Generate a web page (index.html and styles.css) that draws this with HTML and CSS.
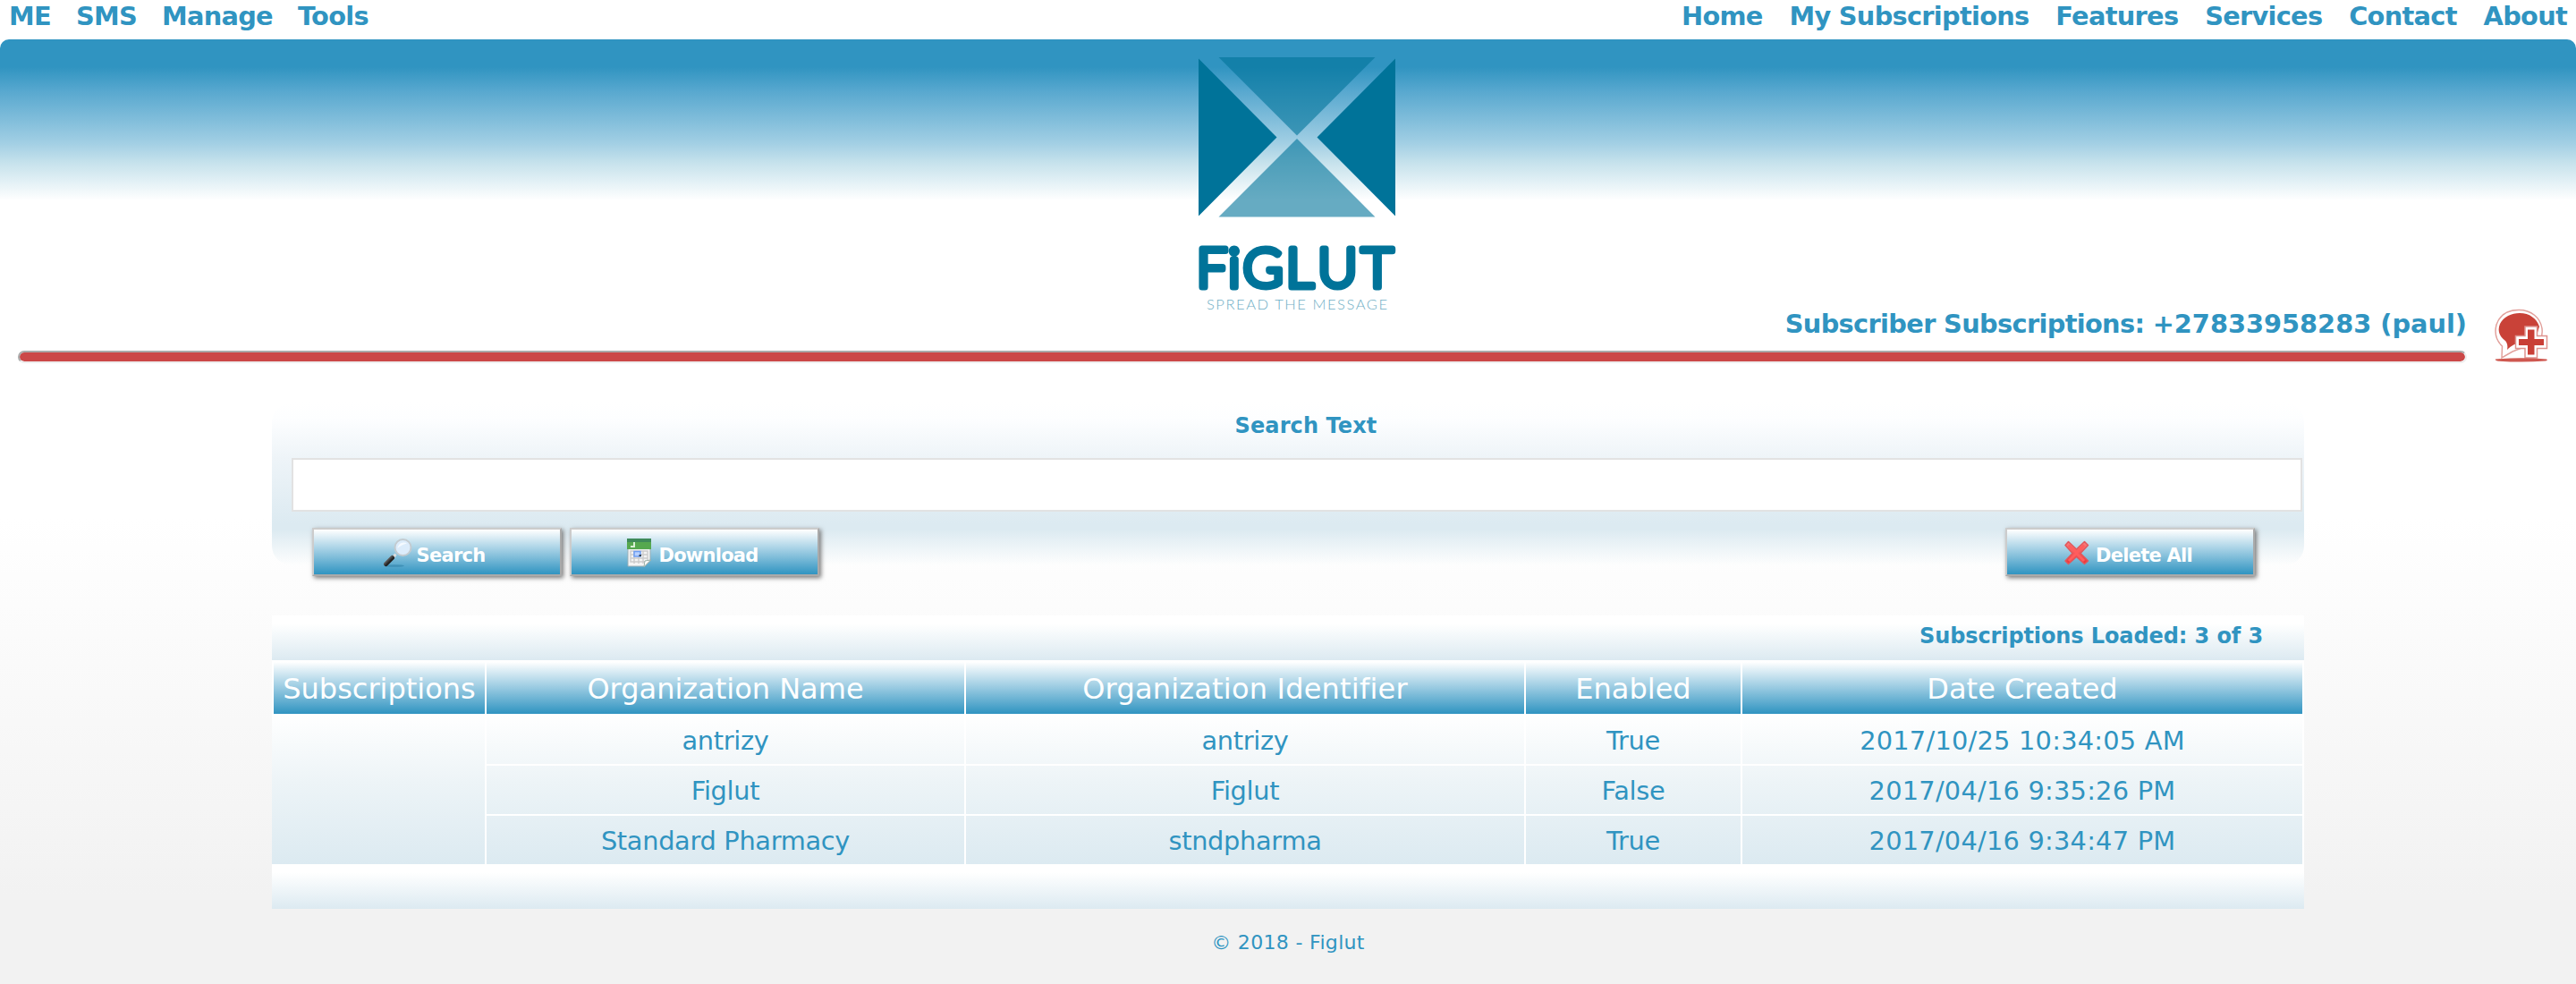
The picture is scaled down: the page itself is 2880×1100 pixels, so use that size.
FILE: index.html
```html
<!DOCTYPE html>
<html lang="en">
<head>
<meta charset="utf-8">
<title>Subscriber Subscriptions - Figlut</title>
<link rel="stylesheet" href="styles.css">
</head>
<body>
<nav class="topnav">
  <ul class="menu"><li>ME</li><li>SMS</li><li>Manage</li><li>Tools</li></ul>
  <ul class="menu menu-site"><li>Home</li><li>My Subscriptions</li><li>Features</li><li>Services</li><li>Contact</li><li>About</li></ul>
</nav>
<header class="banner">
  <svg class="logo" width="220" height="290" viewBox="0 0 220 290">
    <path fill="#007399" d="M0 1.500 87.500 89.500 0 177.500ZM220 1.500 132.500 89.500 220 177.500Z"/>
    <path fill="#007399" fill-opacity=".6" d="M22.500 0H197.500L110 87.500ZM110 91 197.500 178.500H22.500Z"/>
    <g class="wordmark">
      <text x="-2.500" y="256.500">F</text><text x="33" y="256.500">i</text><text x="49.500" y="256.500">G</text><text x="97.500" y="256.500">L</text><text x="133" y="256.500">U</text><text x="182" y="256.500">T</text>
    </g>
    <text class="tagline" x="9" y="281.500" textLength="202">SPREAD THE MESSAGE</text>
  </svg>
</header>
<section class="titlebar">
  <div class="title-main">
    <h1>Subscriber Subscriptions: <span class="number">+27833958283 (paul)</span></h1>
    <hr>
  </div>
  <svg class="add-icon" width="60" height="62" viewBox="0 0 60 62">
    <path d="M8 55 8.500 42C1 35 0 26 2 18 6 6 16 1.500 27 1.500 41 1.500 51 10 53 22 53.500 27 53 32 51 36L20 48Z" fill="#fff" stroke="#e2a19c" stroke-width="1.500"/>
    <path d="M14 46C15 42 14 38 12 36 5 31 3 24 6 17 10 9 19 5 28 5 39 5 47 11 50 20L44 40 30 38C24 38 18 42 14 46Z" fill="#c94238"/>
    <path d="M34 20H47.500V30.500H58.500V44.500H47.500V55H34V44.500H23.500V30.500H34Z" fill="#fff" stroke="#df938e" stroke-width="1.500"/>
    <path d="M37 23.500H44.500V34H55V41H44.500V51.500H37V41H27V34H37Z" fill="#c93f36"/>
    <path d="M1 56.500Q30 54 58 56.500 60 58 57 58.500 30 60.500 3 58.500Q0 57.500 1 56.500Z" fill="#cf5850"/>
  </svg>
</section>
<main class="content">
  <section class="search">
    <label class="search-label" for="q">Search Text</label>
    <input class="search-input" id="q" type="text">
    <div class="actions">
      <button class="btn" type="button">
        <svg width="32" height="32" viewBox="0 0 32 32"><defs><linearGradient id="handle" x1="0" y1="0" x2="1" y2="1"><stop offset="0" stop-color="#999"/><stop offset=".6" stop-color="#222"/></linearGradient></defs><ellipse cx="12" cy="30.500" rx="11" ry="1.300" fill="#1d6f96" opacity=".4"/><path d="M13.500 17.500 10.500 21" stroke="#ddd" stroke-width="3"/><path d="M9.500 21.500 2.500 28.500" stroke="url(#handle)" stroke-width="5" stroke-linecap="round"/><circle cx="21.500" cy="10" r="9" fill="#dcecfb" stroke="#c3cbd0" stroke-width="2"/><path d="M15.500 11A7 7 0 0 1 26 5.500Q19 7 15.500 11Z" fill="#f5faff"/></svg>
        <span>Search</span>
      </button>
      <button class="btn" type="button">
        <svg width="32" height="32" viewBox="0 0 32 32"><path d="M3 1H28V25L22 31H3Z" fill="#f4f4f4" stroke="#9aaeb5"/><path d="M2 0H29V12H2Z" fill="#56a84f"/><path d="M2 0H29V4H2Z" fill="#3f8a5a"/><path d="M10 4V9H6" fill="none" stroke="#d9f0d5" stroke-width="2"/><path d="M6 14H25V26H6ZM6 18H25M6 22H25M10 14V28M15 14V28M20 14V28" fill="none" stroke="#ccc" stroke-width="1.400"/><path d="M10 14.500H17V20H10Z" fill="#b7d1ff" stroke="#6d9df2" stroke-width="1.500"/><path d="M15.500 18H18V20H15.500Z" fill="#345"/><path d="M28.500 24 21 31.500 22 25Z" fill="#fff" stroke="#9ab0a8"/></svg>
        <span>Download</span>
      </button>
      <button class="btn btn-delete" type="button">
        <svg width="32" height="32" viewBox="0 0 32 32"><defs><linearGradient id="cross" x1="0" y1="0" x2="0" y2="1"><stop offset="0" stop-color="#f98080"/><stop offset="1" stop-color="#ee3236"/></linearGradient></defs><path d="M6.500 3.500 15.500 12 24.500 3.500 28.500 7.500 20 16.500 28.500 25 24.500 28.500 15.500 20.500 6.500 28.500 3 25 11 16.500 3 7.500Z" fill="url(#cross)" stroke="#e0585c" stroke-width="1.500" stroke-linejoin="round"/><path d="M7 7.500 15.500 16 24 7.500M7 25 15.500 16.500 24 25" fill="none" stroke="#ff5d5d" stroke-width="3"/></svg>
        <span>Delete All</span>
      </button>
    </div>
  </section>
  <section class="results">
    <div class="band count"><span>Subscriptions Loaded: 3 of 3</span></div>
    <table class="grid">
      <colgroup><col class="c1"><col class="c2"><col class="c3"><col class="c4"><col class="c5"></colgroup>
      <thead><tr><th>Subscriptions</th><th>Organization Name</th><th class="ident">Organization Identifier</th><th>Enabled</th><th>Date Created</th></tr></thead>
      <tbody>
        <tr class="r1"><td rowspan="3" class="side"></td><td>antrizy</td><td>antrizy</td><td>True</td><td class="date">2017/10/25 10:34:05 AM</td></tr>
        <tr class="r2"><td>Figlut</td><td>Figlut</td><td>False</td><td class="date">2017/04/16 9:35:26 PM</td></tr>
        <tr class="r3"><td>Standard Pharmacy</td><td>stndpharma</td><td>True</td><td class="date">2017/04/16 9:34:47 PM</td></tr>
      </tbody>
    </table>
    <div class="band"></div>
  </section>
</main>
<footer class="footer">© 2018 - Figlut</footer>
</body>
</html>
```
FILE: styles.css
```css
* { box-sizing: border-box; }

body {
  margin: 0;
  height: 1100px;
  overflow: hidden;
  font-family: Verdana, "DejaVu Sans", sans-serif;
  color: #3094c1;
  background: linear-gradient(#fff 0, #fff 580px, #f2f2f2 1000px, #f2f2f2 1100px);
}

.topnav {
  display: flex;
  justify-content: space-between;
  height: 44px;
  padding: 1px 10px 0 10px;
}

.menu {
  display: flex;
  gap: 28px;
  margin: 0;
  padding: 0;
  list-style: none;
  font-size: 28.8px;
  font-weight: bold;
  letter-spacing: -.7px;
  line-height: 35px;
  white-space: nowrap;
}

.menu-site { gap: 29.8px; }

.banner {
  height: 296px;
  padding: 20px 0 0 1340px;
  border-radius: 10px 10px 0 0;
  background: linear-gradient(#3094c1 0, #3094c1 31px, #58a8cf 58px, #a2cfe4 116px, #c6e2ec 138px, #fff 180px);
}

.logo { display: block; overflow: visible; }

.wordmark {
  font-family: Lato, sans-serif;
  font-size: 61.500px;
  font-weight: 300;
  fill: #007399;
  stroke: #007399;
  stroke-width: 7px;
  stroke-linejoin: round;
}

.tagline {
  font-family: Lato, sans-serif;
  font-weight: 300;
  font-size: 16.5px;
  fill: #6fafc6;
}

.titlebar {
  display: flex;
  justify-content: space-between;
  height: 110px;
  padding: 5px 31px 0 20px;
}

.title-main { width: 2738px; text-align: right; }

h1 {
  margin: 0;
  font-size: 28.8px;
  letter-spacing: -.65px;
  line-height: 34px;
}

.number { letter-spacing: 0; }

hr {
  height: 14px;
  margin: 13px 0 0;
  border: 2px solid;
  border-color: #aaa #eee #eee #aaa;
  border-radius: 7px;
  background: #cb4848 padding-box;
}

.content { width: 2272px; margin: 0 auto; }

.search {
  display: flex;
  flex-direction: column;
  height: 182px;
  padding-left: 22px;
  padding-right: 2px;
  border-radius: 22px;
  background: linear-gradient(#fff 0, #fdfeff 18px, #eef4f8 62px, #dceaf1 136px, #dceaf1 142px, rgba(255,255,255,0) 182px);
}

.search-label {
  flex: none;
  height: 62px;
  padding-left: 20px;
  text-align: center;
  font-size: 24px;
  font-weight: bold;
  letter-spacing: .1px;
  line-height: 52px;
}

.search-input {
  flex: none;
  width: 100%;
  height: 60px;
  border: 2px solid #e2e2e2;
  background: #fff;
  outline: none;
}

.actions {
  display: flex;
  gap: 9px;
  margin-top: 18px;
  padding: 0 53px 0 23px;
}

.btn {
  display: flex;
  align-items: center;
  justify-content: center;
  gap: 5px;
  width: 279px;
  height: 54px;
  flex: none;
  padding: 7px 6px 0 0;
  border: 2px solid;
  border-color: #ccc #aaa #aaa #ccc;
  background: linear-gradient(#fff, #a2cfe4 45%, #3094c1);
  box-shadow: 2px 2px 5px #777;
  color: #fff;
  font: bold 21px Verdana, "DejaVu Sans", sans-serif;
  letter-spacing: -.75px;
}

.btn svg { margin-top: -6px; }
.btn-delete { margin-left: auto; }

.results { margin-top: 56px; }

.band {
  height: 50px;
  background: linear-gradient(#fff 0, #fff 18%, #dceaf1);
}

.count {
  padding-right: 46px;
  text-align: right;
  font-size: 24px;
  font-weight: bold;
  letter-spacing: -.1px;
  line-height: 46px;
}

.grid {
  width: 2272px;
  table-layout: fixed;
  border-collapse: separate;
  border-spacing: 0;
  text-align: center;
}

.c1 { width: 240px; }
.c2 { width: 536px; }
.c3 { width: 626px; }
.c4 { width: 242px; }
.c5 { width: 628px; }

th {
  height: 60px;
  padding: 2px 0 0;
  border: 0 solid #fff;
  border-width: 2px 2px 0 0;
  background: linear-gradient(#fff, #a2cfe4 45%, #3094c1) padding-box;
  color: #fff;
  font-size: 32px;
  font-weight: normal;
  white-space: nowrap;
}

th:first-child { border-left-width: 2px; }
.ident { letter-spacing: .2px; }

tbody { background: linear-gradient(#fff, #edf4f7 45%, #dceaf1); }

td {
  padding: 1px 0 0;
  border: 0 solid #fff;
  border-width: 0 2px 2px 0;
  font-size: 28.8px;
  letter-spacing: -.3px;
}

.date { letter-spacing: .25px; }

.r1 { height: 58px; }
.r1 td { padding-top: 3px; }
.r2 { height: 56px; }
.r3 { height: 54px; }
.r3 td, .side { border-bottom-width: 0; }

.footer {
  padding-top: 24px;
  text-align: center;
  font-size: 22px;
  letter-spacing: .33px;
  line-height: 28px;
}
```
